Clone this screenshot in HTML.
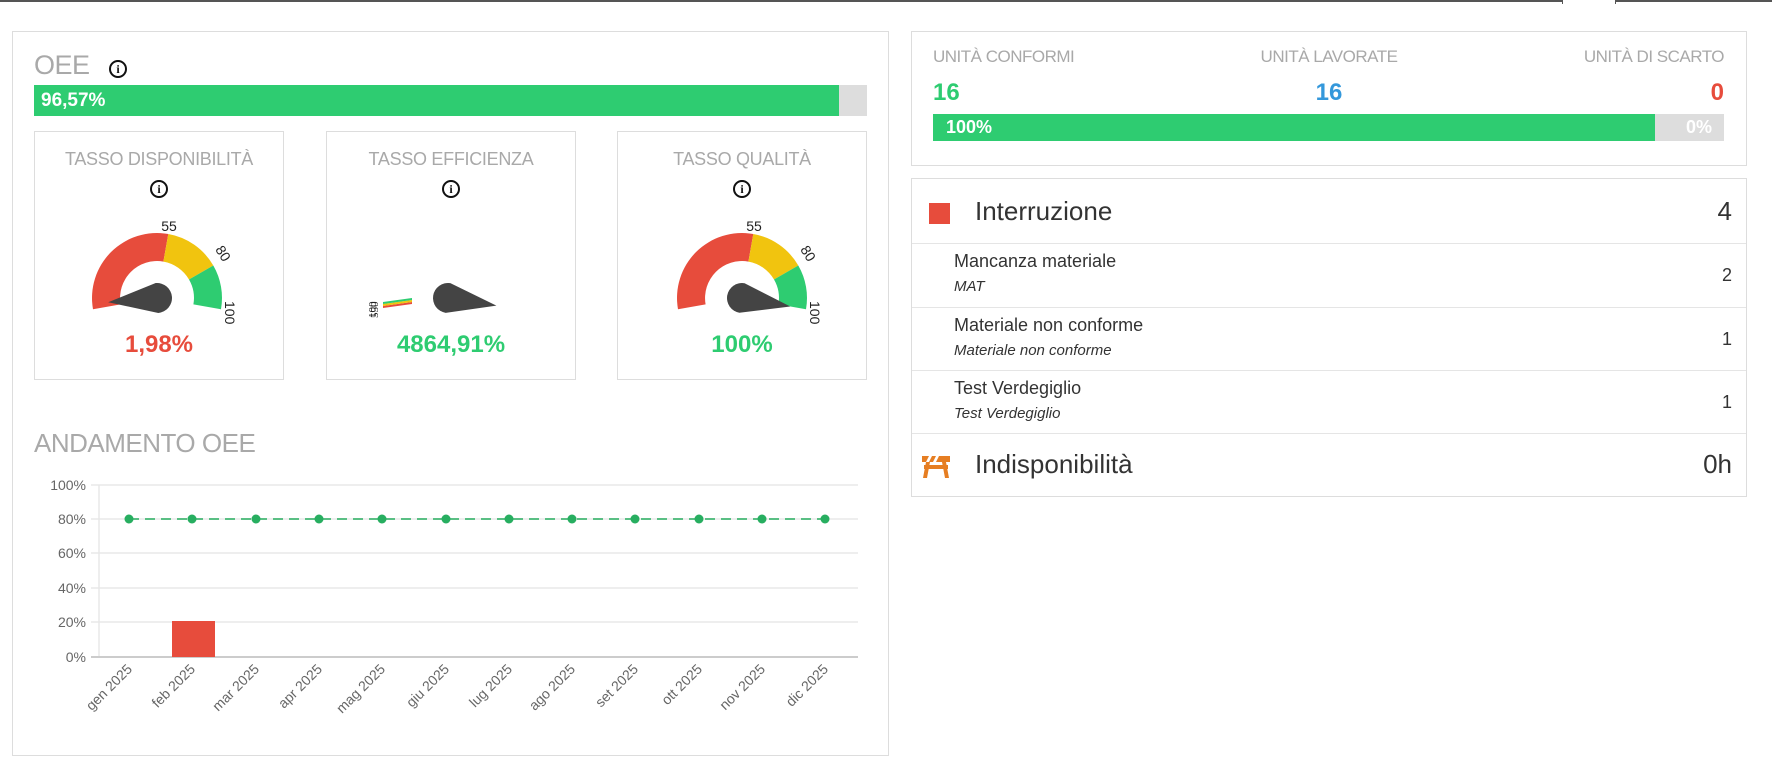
<!DOCTYPE html>
<html><head><meta charset="utf-8"><style>
*{box-sizing:border-box;margin:0;padding:0}
body{width:1772px;height:772px;background:#fff;font-family:"Liberation Sans",sans-serif;position:relative;overflow:hidden;color:#333}
.a{position:absolute}
.panel{position:absolute;border:1px solid #ddd;background:#fff}
.gray{color:#a9a9a9}
.info{position:absolute;width:18px;height:18px;border:2px solid #111;border-radius:50%;font:bold 12px "Liberation Serif",serif;text-align:center;line-height:14px;color:#111}
.box{position:absolute;top:131px;width:250px;height:249px;border:1px solid #ddd}
.box .t{position:absolute;top:17px;left:0;width:100%;text-align:center;font-size:18px;color:#a9a9a9;letter-spacing:-0.3px}
.box .v{position:absolute;top:199px;left:0;width:100%;text-align:center;font-size:24px;font-weight:bold}
.row{position:absolute;left:0;width:100%;border-top:1px solid #e5e5e5}
</style></head><body>
<div class="a" style="left:0;top:0;width:1562px;height:2px;background:#555"></div>
<div class="a" style="left:1615px;top:0;width:157px;height:2px;background:#555"></div>
<div class="a" style="left:1562px;top:0;width:1px;height:4px;background:#555"></div>
<div class="a" style="left:1615px;top:0;width:1px;height:4px;background:#555"></div>

<!-- left panel -->
<div class="panel" style="left:12px;top:31px;width:877px;height:725px"></div>
<div class="a gray" style="left:34px;top:50px;font-size:27px;letter-spacing:-0.5px">OEE</div>
<div class="info" style="left:109px;top:60px">i</div>
<div class="a" style="left:34px;top:85px;width:833px;height:31px;background:#ddd"></div>
<div class="a" style="left:34px;top:85px;width:805px;height:31px;background:#2ecc71;color:#fff;font-weight:bold;font-size:19px;line-height:31px;padding-left:7px">96,57%</div>

<div class="box" style="left:34px"><div class="t">TASSO DISPONIBILITÀ</div><div class="info" style="left:115px;top:48px">i</div><div class="v" style="color:#e74c3c">1,98%</div></div>
<div class="box" style="left:326px"><div class="t">TASSO EFFICIENZA</div><div class="info" style="left:115px;top:48px">i</div><div class="v" style="color:#2ecc71">4864,91%</div></div>
<div class="box" style="left:617px"><div class="t">TASSO QUALITÀ</div><div class="info" style="left:115px;top:48px">i</div><div class="v" style="color:#2ecc71">100%</div></div>

<svg class="a" style="left:0;top:0" width="900" height="772">
<defs>
<g id="arc">
<path d="M-64 11.3 A65 65 0 0 1 11.3 -64 L6.4 -36.4 A37 37 0 0 0 -36.4 6.4Z" fill="#e74c3c"/>
<path d="M11.3 -64 A65 65 0 0 1 56.3 -32.5 L32 -18.5 A37 37 0 0 0 6.4 -36.4Z" fill="#f1c40f"/>
<path d="M56.3 -32.5 A65 65 0 0 1 64 11.3 L36.4 6.4 A37 37 0 0 0 32 -18.5Z" fill="#2ecc71"/>
<text x="12" y="-67" font-family="Liberation Sans" font-size="14" fill="#222" text-anchor="middle">55</text>
<text transform="translate(62,-42) rotate(58)" font-family="Liberation Sans" font-size="14" fill="#222" text-anchor="middle">80</text>
<text transform="translate(68,3) rotate(90)" font-family="Liberation Sans" font-size="14" fill="#222">100</text>
</g>
<g id="needle"><path d="M0 -15 L49 0 L0 15 A15 15 0 0 1 0 -15Z" fill="#444"/></g>
</defs>
<g transform="translate(157,298)"><use href="#arc"/><use href="#needle" transform="rotate(175)"/></g>
<g transform="translate(742,298)"><use href="#arc"/><use href="#needle" transform="rotate(10)"/></g>
<g transform="translate(448,298)"><use href="#needle" transform="rotate(9)"/></g>
<path d="M383 306 L412 302 L412 304 L383 308Z" fill="#e74c3c"/>
<path d="M383 304 L412 300 L412 302 L383 306Z" fill="#f1c40f"/>
<path d="M383 302 L412 298 L412 300 L383 304Z" fill="#2ecc71"/>
<text transform="translate(376,318) rotate(-90)" font-family="Liberation Serif" font-size="11" fill="#222">100</text>
<text transform="translate(378,318) rotate(-90)" font-family="Liberation Serif" font-size="11" fill="#222">550</text>

<!-- chart -->
<g font-family="Liberation Sans" font-size="14" fill="#666" text-anchor="end">
<text x="86" y="490">100%</text><text x="86" y="524">80%</text><text x="86" y="558">60%</text>
<text x="86" y="593">40%</text><text x="86" y="627">20%</text><text x="86" y="662">0%</text>
</g>
<g stroke="#e8e8e8" stroke-width="1.5">
<line x1="91" y1="485" x2="858" y2="485"/><line x1="91" y1="519" x2="858" y2="519"/><line x1="91" y1="553" x2="858" y2="553"/>
<line x1="91" y1="588" x2="858" y2="588"/><line x1="91" y1="622" x2="858" y2="622"/>
<line x1="99" y1="485" x2="99" y2="657"/>
</g>
<line x1="91" y1="657" x2="858" y2="657" stroke="#ccc" stroke-width="2"/>
<rect x="172" y="621" width="43" height="36" fill="#e74c3c"/>
<line x1="129" y1="519" x2="825" y2="519" stroke="#27ae60" stroke-width="1.5" stroke-dasharray="10,6"/>
<g fill="#27ae60">
<circle cx="129" cy="519" r="4.5"/><circle cx="192" cy="519" r="4.5"/><circle cx="256" cy="519" r="4.5"/><circle cx="319" cy="519" r="4.5"/>
<circle cx="382" cy="519" r="4.5"/><circle cx="446" cy="519" r="4.5"/><circle cx="509" cy="519" r="4.5"/><circle cx="572" cy="519" r="4.5"/>
<circle cx="635" cy="519" r="4.5"/><circle cx="699" cy="519" r="4.5"/><circle cx="762" cy="519" r="4.5"/><circle cx="825" cy="519" r="4.5"/>
</g>
<g font-family="Liberation Sans" font-size="14" fill="#666" text-anchor="end">
<text transform="translate(133,670) rotate(-45)">gen 2025</text>
<text transform="translate(196,670) rotate(-45)">feb 2025</text>
<text transform="translate(260,670) rotate(-45)">mar 2025</text>
<text transform="translate(323,670) rotate(-45)">apr 2025</text>
<text transform="translate(386,670) rotate(-45)">mag 2025</text>
<text transform="translate(450,670) rotate(-45)">giu 2025</text>
<text transform="translate(513,670) rotate(-45)">lug 2025</text>
<text transform="translate(576,670) rotate(-45)">ago 2025</text>
<text transform="translate(639,670) rotate(-45)">set 2025</text>
<text transform="translate(703,670) rotate(-45)">ott 2025</text>
<text transform="translate(766,670) rotate(-45)">nov 2025</text>
<text transform="translate(829,670) rotate(-45)">dic 2025</text>
</g>
</svg>
<div class="a gray" style="left:34px;top:428px;font-size:26px;letter-spacing:-0.5px">ANDAMENTO OEE</div>

<!-- right top -->
<div class="panel" style="left:911px;top:31px;width:836px;height:135px"></div>
<div class="a gray" style="left:933px;top:47px;font-size:17px;letter-spacing:-0.5px">UNITÀ CONFORMI</div>
<div class="a gray" style="left:1249px;top:47px;width:160px;text-align:center;font-size:17px;letter-spacing:-0.5px">UNITÀ LAVORATE</div>
<div class="a gray" style="left:1524px;top:47px;width:200px;text-align:right;font-size:17px;letter-spacing:-0.5px">UNITÀ DI SCARTO</div>
<div class="a" style="left:933px;top:79px;font-size:24px;font-weight:bold;color:#2ecc71">16</div>
<div class="a" style="left:1289px;top:79px;width:80px;text-align:center;font-size:24px;font-weight:bold;color:#3498db">16</div>
<div class="a" style="left:1624px;top:79px;width:100px;text-align:right;font-size:24px;font-weight:bold;color:#e74c3c">0</div>
<div class="a" style="left:933px;top:114px;width:791px;height:27px;background:#ddd;color:#fff;font-weight:bold;font-size:18px;line-height:27px;text-align:right;padding-right:12px">0%</div>
<div class="a" style="left:933px;top:114px;width:722px;height:27px;background:#2ecc71;color:#fff;font-weight:bold;font-size:18px;line-height:27px;padding-left:13px">100%</div>

<!-- right bottom -->
<div class="panel" style="left:911px;top:178px;width:836px;height:319px">
<div class="a" style="left:17px;top:24px;width:21px;height:21px;background:#e74c3c"></div>
<div class="a" style="left:63px;top:17px;font-size:26px;color:#333">Interruzione</div>
<div class="a" style="right:14px;top:17px;font-size:26px;color:#333">4</div>
<div class="row" style="top:64px;height:64px"><div class="a" style="left:42px;top:7px;font-size:18px">Mancanza materiale</div><div class="a" style="left:42px;top:34px;font-size:15px;font-style:italic">MAT</div><div class="a" style="right:14px;top:21px;font-size:18px">2</div></div>
<div class="row" style="top:128px;height:63px"><div class="a" style="left:42px;top:7px;font-size:18px">Materiale non conforme</div><div class="a" style="left:42px;top:34px;font-size:15px;font-style:italic">Materiale non conforme</div><div class="a" style="right:14px;top:21px;font-size:18px">1</div></div>
<div class="row" style="top:191px;height:63px"><div class="a" style="left:42px;top:7px;font-size:18px">Test Verdegiglio</div><div class="a" style="left:42px;top:34px;font-size:15px;font-style:italic">Test Verdegiglio</div><div class="a" style="right:14px;top:21px;font-size:18px">1</div></div>
<div class="row" style="top:254px;height:64px">
<svg class="a" style="left:9px;top:20px" width="30" height="25" viewBox="0 0 30 25"><g fill="#e67e22"><rect x="1" y="2" width="28" height="6"/><rect x="3" y="11" width="24" height="4"/><path d="M5 8 L9 8 L6 24 L2 24Z"/><path d="M21 8 L25 8 L28 24 L24 24Z"/></g><g fill="#fff"><path d="M8 2 L11 2 L8 8 L5 8Z"/><path d="M15 2 L18 2 L15 8 L12 8Z"/></g></svg>
<div class="a" style="left:63px;top:15px;font-size:26px">Indisponibilità</div><div class="a" style="right:14px;top:15px;font-size:26px">0h</div></div>
</div>
</body></html>
